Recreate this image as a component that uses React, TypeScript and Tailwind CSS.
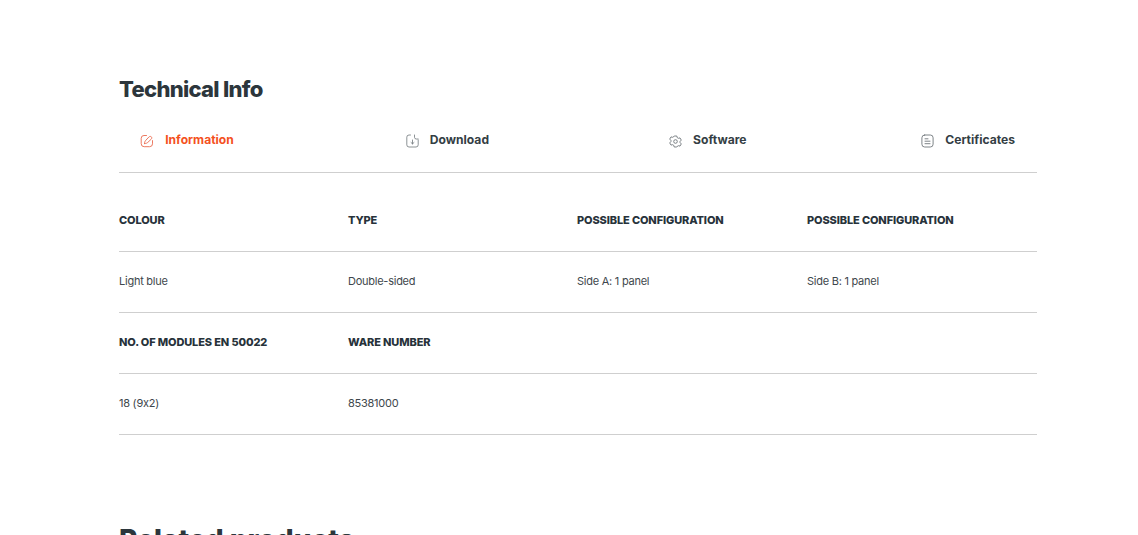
const tabs = [
  { label: "Information", active: true, icon: "edit" },
  { label: "Download", active: false, icon: "download" },
  { label: "Software", active: false, icon: "gear" },
  { label: "Certificates", active: false, icon: "list" },
];

function Icon({ name }: { name: string }) {
  if (name === "edit")
    return (
      <svg width="14" height="14" viewBox="0 0 14 14" fill="none" stroke="currentColor" strokeWidth="0.9" strokeLinecap="round" strokeLinejoin="round" className="shrink-0">
        <path d="M6.5 1.5H4A2.8 2.8 0 0 0 1.2 4.3v5.4A3 3 0 0 0 4.2 12.7h5.4a2.9 2.9 0 0 0 2.9-2.9V6.6" />
        <path d="M4.6 9.5c-.2-1.2.4-2.3 1.2-3.2l3-3.2c.8-.8 1.8-.9 2.5-.3.7.7.6 1.7-.2 2.5L8 8.2c-.9.9-2.1 1.5-3.4 1.3z" />
      </svg>
    );
  if (name === "download")
    return (
      <svg width="13" height="14" viewBox="0 0 13 14" fill="none" stroke="currentColor" strokeWidth="0.8" strokeLinecap="round" strokeLinejoin="round" className="shrink-0">
        <path d="M4.5 1H3A2.2 2.2 0 0 0 .8 3.2v7.6A2.2 2.2 0 0 0 3 13h7a2.2 2.2 0 0 0 2.2-2.2V6" />
        <path d="M8.5 1v2.4A1.8 1.8 0 0 0 10.3 5h1.9" />
        <path d="M6.5 6v3.8M5 8.5l1.5 1.4L8 8.5" />
      </svg>
    );
  if (name === "gear")
    return (
      <svg width="13" height="13" viewBox="0 0 13 13" fill="none" stroke="currentColor" strokeWidth="0.9" strokeLinejoin="round" className="shrink-0">
        <path d="M5.2 1h2.6l.4 1.6 1.2.7 1.6-.4 1.3 2.2-1.2 1.2v1.4l1.2 1.2-1.3 2.2-1.6-.4-1.2.7L7.8 12H5.2l-.4-1.6-1.2-.7-1.6.4L.7 7.9l1.2-1.2V5.3L.7 4.1 2 1.9l1.6.4 1.2-.7z" />
        <circle cx="6.5" cy="6.5" r="1.8" />
      </svg>
    );
  return (
    <svg width="13" height="14" viewBox="0 0 13 14" fill="none" stroke="currentColor" strokeWidth="0.9" strokeLinecap="round" className="shrink-0">
      <rect x="0.9" y="1" width="11.2" height="12" rx="2.8" />
      <path d="M4 4.8h3M4 7.2h5M4 9.7h5" />
    </svg>
  );
}

const rows = [
  { head: true, cells: ["COLOUR", "TYPE", "POSSIBLE CONFIGURATION", "POSSIBLE CONFIGURATION"] },
  { head: false, cells: ["Light blue", "Double-sided", "Side A: 1 panel", "Side B: 1 panel"] },
  { head: true, cells: ["NO. OF MODULES EN 50022", "WARE NUMBER", "", ""] },
  { head: false, cells: ["18 (9x2)", "85381000", "", ""] },
];

export default function App() {
  return (
    <div className="h-[535px] overflow-hidden bg-white px-[119px] pt-[76px] font-['Inter',sans-serif] text-[#2c363c] [font-feature-settings:'calt'_0]">
      <div className="w-[918px]">
        <h2 className="h-[27px] text-[22px] leading-[27px] font-extrabold tracking-[-0.7px]">Technical Info</h2>
        <div className="mt-[22px] flex h-[48px] gap-[124.4px] border-b border-[#cfcfcf]">
          {tabs.map((t) => (
            <div
              key={t.label}
              className={`flex h-[26px] w-[136px] items-end justify-center gap-[11px] text-[12.1px] leading-[22px] font-bold ${t.active ? "text-[#f4511e]" : "text-[#343e44]"}`}
            >
              <span className={t.active ? "flex pb-[3px] text-[#ea6a4e]" : "flex pb-[3px] text-[#6f767a]"}>
                <Icon name={t.icon} />
              </span>
              <span>{t.label}</span>
            </div>
          ))}
        </div>
        <div className="mt-[18px]">
          {rows.map((r, i) => (
            <div key={i} className="grid h-[61px] grid-cols-[229px_229px_230px_230px] items-center border-b border-[#cfcfcf] pb-[2px]">
              {r.cells.map((c, j) => (
                <div
                  key={j}
                  className={r.head ? "text-[11px] font-extrabold tracking-[-0.12px] text-[#27323a]" : "text-[11px] font-normal tracking-[-0.25px] text-[#3e474c]"}
                >
                  {c}
                </div>
              ))}
            </div>
          ))}
        </div>
        <h2 className="mt-[88px] text-[28px] leading-[34px] font-extrabold text-[#2c363c]">Related products</h2>
      </div>
    </div>
  );
}
